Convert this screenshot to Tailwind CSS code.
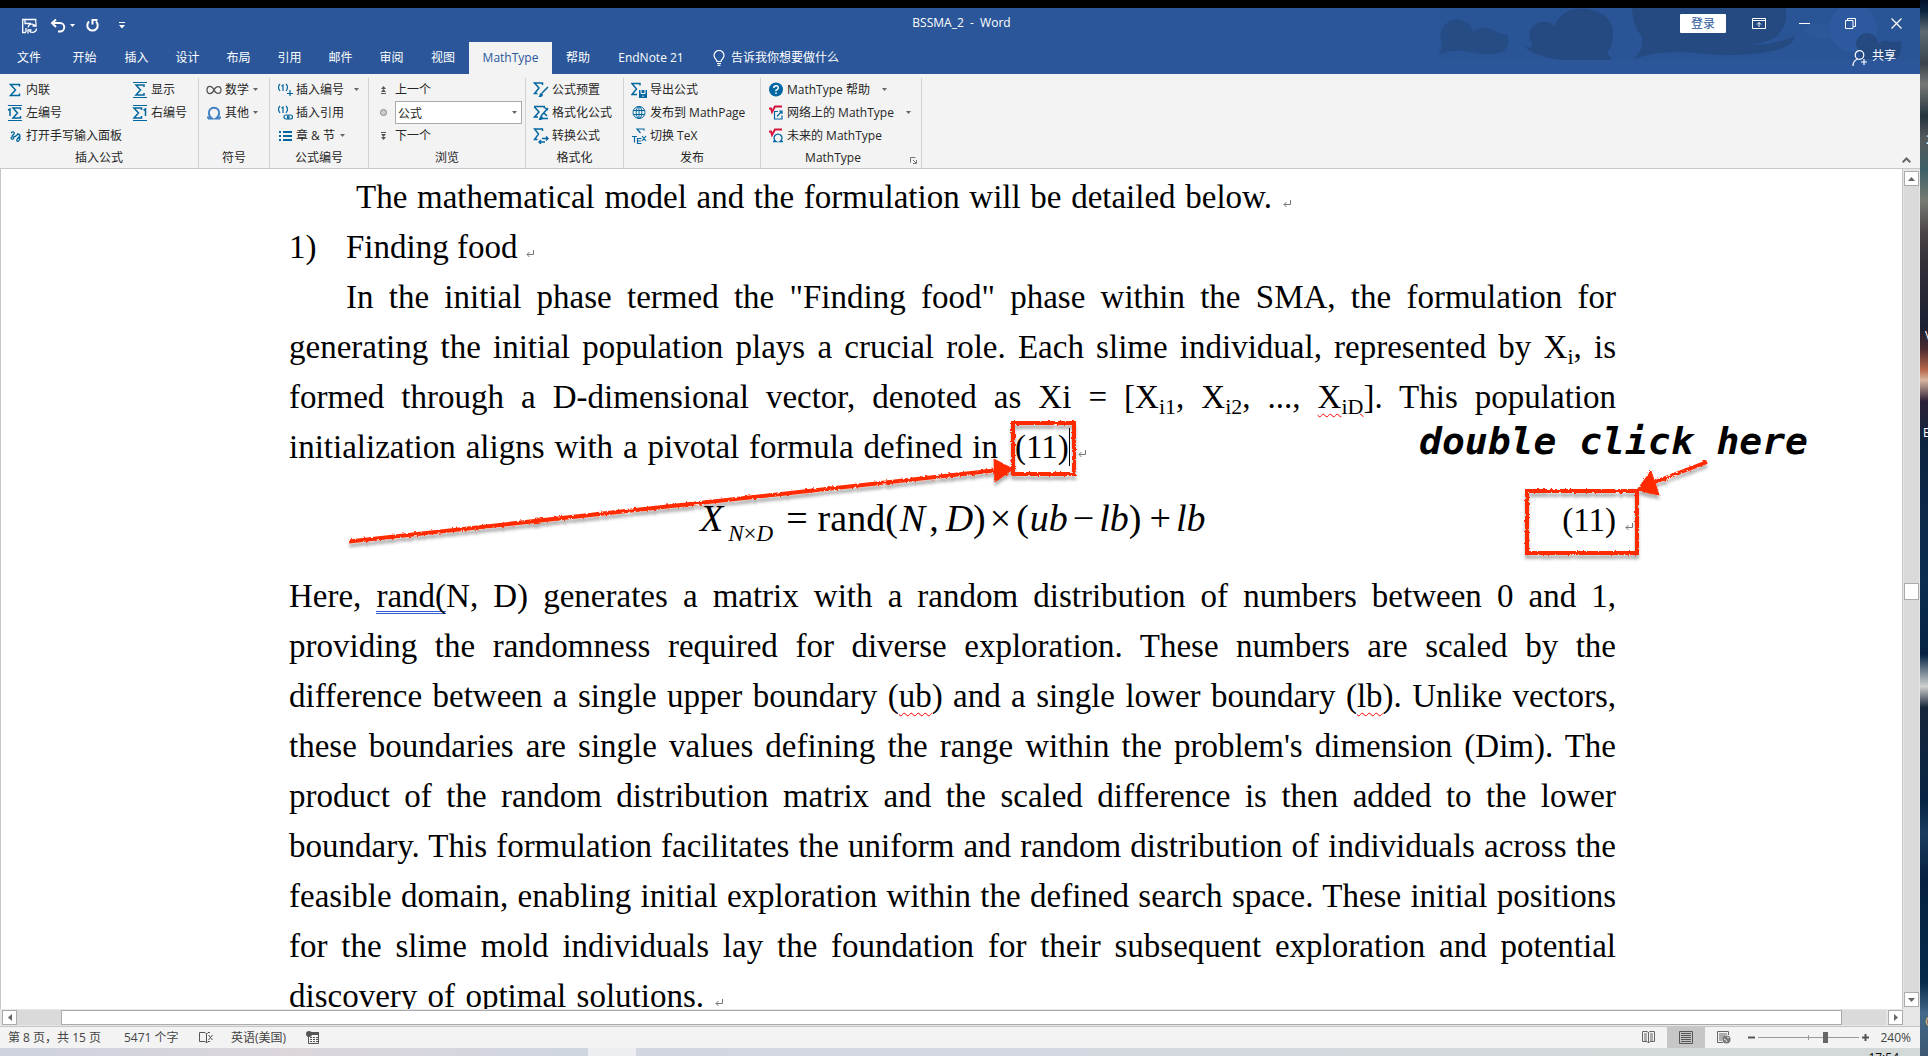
<!DOCTYPE html>
<html lang="zh-CN">
<head>
<meta charset="utf-8">
<title>BSSMA_2 - Word</title>
<script src="https://cdn.jsdelivr.net/npm/@tailwindcss/browser@4"></script>
</head>
<body class="flex h-screen overflow-hidden bg-black text-xs text-[#262626] font-['Open_Sans','Noto_Sans_CJK_SC',sans-serif]">
<svg class="hidden">
  <symbol id="sigma" viewBox="0 0 16 16"><path d="M12.5 4.5V2.5H3.5L8.5 8 3.500 13.500H12.500V11.500" fill="none" stroke="#0067a0" stroke-width="1.500"/></symbol>
  <symbol id="caret" viewBox="0 0 5 3"><path d="M0 0h5L2.500 3z" fill="currentColor"/></symbol>
  <symbol id="ret" viewBox="0 0 8 8"><path d="M7.500 0v4.500H1M3.500 2L1 4.500 3.500 7" fill="none" stroke="#777"/></symbol>
</svg>

<div class="flex h-full min-w-0 flex-1 flex-col">
  <div class="h-2 shrink-0 bg-black"></div>

  <header class="relative shrink-0 bg-[#2b579a] text-white">
    <svg class="absolute top-0 right-0 h-[52px] w-[490px]" viewBox="1430 8 490 52" fill="#254a82">
      <g opacity=".5"><path d="M1439 8h481v52h-481z" fill="#27518f"/></g>
      <path d="M1439 54q5-8 2-14a16 16 0 1 1 32-8q10-8 20-2t14 4q4 14-4 16l4 1q-18 6-36 1-16-4-32 2z" opacity=".8"/>
      <path d="M1524 46q8 4 8-2-8-14 6-21 10-3 16 3 10-22 38-16 20 6 21 22 0 14-6 21l6 8h-40q-38-3-49-15z"/>
      <path d="M1632 8h154q2 20-12 30-12 6-30 8l24-2q20-4 26-8 2 9-22 15-30 6-66 3-44-6-72 5 10-10 8-22-9-10-10-29z"/>
      <path d="M1803 30q14-12 26-4l4 10q-18 8-30-6z" fill="#2c5899"/>
      <circle cx="1853" cy="28" r="24" fill="#2d5a9f"/>
      <path d="M1856 44a11 11 0 0 1 22 0q6-6 12-2l11-1q2 14-6 18h-34z"/>
    </svg>
    <div class="relative flex h-[34px] items-center">
      <div class="flex flex-1 items-center pl-[21px]">
        <button aria-label="保存" class="mr-3"><svg class="size-[17px]" viewBox="0 0 17 17" fill="none" stroke="#fff" stroke-width="1.300"><path d="M5 15.500H1.700V2.500h13v3M4 2.500v4h6M5 15v-4"/><path d="M7 10.500a4 4 0 0 1 7-2M15 5.500v3.500h-3.500M15.500 11.500a4 4 0 0 1-7 2.500M7 16.500V13h3.500"/></svg></button>
        <button aria-label="撤消" class="mr-1"><svg class="h-[15px] w-4" viewBox="0 0 16 15" fill="none" stroke="#fff" stroke-width="2"><path d="M6 1.500L2 5l4 4M2 5h8a4 4 0 0 1 0 8.500H8"/></svg></button>
        <button aria-label="撤消选项" class="mr-[10px]"><svg class="h-[3px] w-[5px]"><use href="#caret"/></svg></button>
        <button aria-label="重复" class="mr-[19px]"><svg class="size-[15px]" viewBox="0 0 15 15" fill="none" stroke="#fff" stroke-width="2"><path d="M4 3.500a5.200 5.200 0 1 0 7 0M7.500 6.500V2h5"/></svg></button>
        <button aria-label="自定义快速访问工具栏"><svg class="h-[7px] w-[6px]" viewBox="0 0 6 7" fill="#fff"><path d="M0 0h6v1H0zM0 3h6L3 6.500z"/></svg></button>
      </div>
      <h1 class="pb-1 whitespace-pre">BSSMA_2  -  Word</h1>
      <div class="flex flex-1 items-center justify-end pr-[18px] pb-[3px]">
        <button class="mr-[26px] h-[19px] w-[46px] rounded-[1px] bg-white leading-[18px] text-[#2b579a]">登录</button>
        <button aria-label="功能区显示选项" class="mr-[33px]"><svg class="h-[11px] w-[14px]" viewBox="0 0 14 11" fill="none" stroke="#fff"><path d="M.5.500h13v10H.5zM.5 2.500h13M7 9V4.500M5 6.500l2-2 2 2"/></svg></button>
        <button aria-label="最小化" class="mr-[35px]"><svg class="h-[11px] w-[11px]" viewBox="0 0 11 11" stroke="#fff"><path d="M0 5.500h11"/></svg></button>
        <button aria-label="还原" class="mr-[35px]"><svg class="size-[11px]" viewBox="0 0 11 11" fill="none" stroke="#fff"><path d="M.5 2.500h7.500v8H.5zM2.500 2.500v-2h8v8H8"/></svg></button>
        <button aria-label="关闭"><svg class="size-[11px]" viewBox="0 0 11 11" stroke="#fff" stroke-width="1.200"><path d="M.5.500l10 10M10.500.500l-10 10"/></svg></button>
      </div>
    </div>
    <nav class="relative flex h-8 items-stretch leading-[30px]">
      <button class="w-[58px]">文件</button>
      <button class="w-[53px]">开始</button>
      <button class="w-[51px]">插入</button>
      <button class="w-[51px]">设计</button>
      <button class="w-[51px]">布局</button>
      <button class="w-[51px]">引用</button>
      <button class="w-[51px]">邮件</button>
      <button class="w-[51px]">审阅</button>
      <button class="w-[52px]">视图</button>
      <button class="w-[83px] bg-[#f3f3f3] text-[#2b579a]">MathType</button>
      <button class="w-[52px]">帮助</button>
      <button class="w-[94px]">EndNote 21</button>
      <button class="flex items-center gap-[6px] pl-[15px] leading-8"><svg class="h-4 w-3" viewBox="0 0 12 16" fill="none" stroke="#fff" stroke-width="1.200"><path d="M4 11.500c0-2-3-3-3-6a5 5 0 0 1 10 0c0 3-3 4-3 6zM4 13.500h4M4.500 15.300h3"/></svg>告诉我你想要做什么</button>
      <button class="ml-auto flex items-center gap-1 pr-6 pb-1"><svg class="mt-1 size-4" viewBox="0 0 16 16" fill="none" stroke="#fff" stroke-width="1.200"><circle cx="7.500" cy="5" r="4.300"/><path d="M1 16q0-5 4.500-7M12 9v6M9 12h6"/></svg>共享</button>
    </nav>
  </header>

  <section class="relative flex h-[95px] shrink-0 border-b border-[#c8c8c8] bg-[#f3f3f3] pt-1 leading-[23px] *:flex *:flex-col *:justify-between">
    <div class="w-[199px] border-r border-[#d2d2d2]">
      <div class="grid grid-cols-[125px_1fr] pl-[7px]">
        <button class="flex items-center gap-[3px]"><svg class="size-4"><use href="#sigma"/></svg>内联</button>
        <button class="flex items-center gap-[3px]"><svg class="size-4" viewBox="0 0 16 16" fill="none" stroke="#0067a0"><path d="M1 .5h14M1 15.500h14"/><path d="M12 5V3H4l4.500 5L4 13h8v-2" stroke-width="1.500"/></svg>显示</button>
        <button class="flex items-center gap-[3px]"><svg class="size-4" viewBox="0 0 16 16" fill="none" stroke="#0067a0"><path d="M1 .5h14M1 15.500h14"/><path d="M13.500 5V3H6l4.500 5L6 13h7.500v-2M1 5l2-1v7" stroke-width="1.500"/></svg>左编号</button>
        <button class="flex items-center gap-[3px]"><svg class="size-4" viewBox="0 0 16 16" fill="none" stroke="#0067a0"><path d="M1 .5h14M1 15.500h14"/><path d="M9.500 5V3H2l4.500 5L2 13h7.500v-2M11.500 5l2-1v7" stroke-width="1.500"/></svg>右编号</button>
        <button class="col-span-2 flex items-center gap-[3px]"><svg class="size-4" viewBox="0 0 16 16" fill="none" stroke="#0067a0" stroke-width="1.300"><path d="M4 5c2-2 4-1 3 1L5 8c0 2 3 1 5-1s4 0 2 2-3 3-2 4 3-1 3-3M10 6c3 0 4 2 2 5M4 9c0 3 2 3 3 1"/></svg>打开手写输入面板</button>
      </div>
      <div class="text-center leading-[21px]">插入公式</div>
    </div>
    <div class="w-[71px] border-r border-[#d2d2d2]">
      <div class="pl-[7px]">
        <button class="flex items-center gap-[3px]"><svg class="size-4" viewBox="0 0 16 16" fill="none" stroke="#555" stroke-width="1.300"><path d="M8 8C6 3.500 1 3 1 8s5 4.500 7 0 7-4.500 7 0-5 4.500-7 0z"/></svg>数学<svg class="ml-px h-[3px] w-[5px] text-[#666]"><use href="#caret"/></svg></button>
        <button class="flex items-center gap-[3px]"><svg class="size-4" viewBox="0 0 16 16" fill="none" stroke="#3f7fc4" stroke-width="2"><path d="M2 13.500h4C2.500 11 2 7 4 4.500s6-2.500 8 0 1.500 6.500-2 9h4M2 13.500v-2M14 13.500v-2"/></svg>其他<svg class="ml-px h-[3px] w-[5px] text-[#666]"><use href="#caret"/></svg></button>
      </div>
      <div class="text-center leading-[21px]">符号</div>
    </div>
    <div class="w-[99px] border-r border-[#d2d2d2]">
      <div class="pl-[7px]">
        <button class="flex items-center gap-[3px]"><svg class="size-4" viewBox="0 0 16 16" fill="none" stroke="#0067a0"><path d="M3 2q-3 3 0 7M9 2q3 3 0 7M4.500 4L6 3v6M13 8v6M10 11.500h6" stroke-width="1.200"/></svg>插入编号<svg class="ml-[7px] h-[3px] w-[5px] text-[#666]"><use href="#caret"/></svg></button>
        <button class="flex items-center gap-[3px]"><svg class="size-4" viewBox="0 0 16 16" fill="none" stroke="#0067a0" stroke-width="1.200"><path d="M3 1q-3 3 0 7M9 1q3 3 0 7M4.500 3L6 2v6"/><rect x="7" y="10" width="5" height="4" rx="2"/><rect x="10.500" y="10" width="5" height="4" rx="2"/></svg>插入引用</button>
        <button class="flex items-center gap-[3px]"><svg class="size-4" viewBox="0 0 16 16" fill="#0067a0"><path d="M2 3h2v2H2zM2 7h2v2H2zM2 11h2v2H2zM6 3h9v2H6zM6 7h9v2H6zM6 11h9v2H6z"/></svg>章 &amp; 节<svg class="ml-[2px] h-[3px] w-[5px] text-[#666]"><use href="#caret"/></svg></button>
      </div>
      <div class="text-center leading-[21px]">公式编号</div>
    </div>
    <div class="w-[157px] border-r border-[#d2d2d2]">
      <div class="pl-[11px]">
        <button class="flex items-center gap-2"><svg class="h-2 w-[7px]" viewBox="0 0 7 8" fill="#555"><path d="M3.500 0L6 3H1zM3.500 3L6 6H1zM1 7h5v1H1z"/></svg>上一个</button>
        <div class="flex h-[23px] items-center gap-2"><svg class="size-[7px]" viewBox="0 0 7 7"><circle cx="3.500" cy="3.500" r="3" fill="#ccc" stroke="#888"/></svg>
          <div class="relative"><select aria-label="浏览对象" class="block h-[23px] w-[127px] appearance-none border border-[#ababab] bg-white pb-[2px] pl-[2px]"><option>公式</option></select><svg class="pointer-events-none absolute top-[10px] right-[5px] h-[3px] w-[5px] text-[#666]"><use href="#caret"/></svg></div></div>
        <button class="flex items-center gap-2"><svg class="h-2 w-[7px]" viewBox="0 0 7 8" fill="#555"><path d="M3.500 8L6 5H1zM3.500 5L6 2H1zM1 0h5v1H1z"/></svg>下一个</button>
      </div>
      <div class="text-center leading-[21px]">浏览</div>
    </div>
    <div class="w-[98px] border-r border-[#d2d2d2]">
      <div class="pl-[7px]">
        <button class="flex items-center gap-[3px]"><svg class="size-4" viewBox="0 0 16 16" fill="none" stroke="#0067a0" stroke-width="1.500"><path d="M9.500 3V1H1.500L6 6 1.500 11.500h3M15 5L9 11" /><path d="M5 15c2 0 1-4 3-4s3 3 0 4z" fill="#0067a0" stroke="none"/></svg>公式预置</button>
        <button class="flex items-center gap-[3px]"><svg class="size-4" viewBox="0 0 16 16" fill="none" stroke="#0067a0" stroke-width="1.500"><path d="M1 1.500h11M10 1.500L15 5M1.500 2L6 7l-4.500 5H5M15 3L8 11M9 13.500h6M11 8l3 3"/><path d="M5 15c2 0 1-4 3-4s3 3 0 4z" fill="#0067a0" stroke="none"/></svg>格式化公式</button>
        <button class="flex items-center gap-[3px]"><svg class="size-4" viewBox="0 0 16 16" fill="none" stroke="#0067a0" stroke-width="1.400"><path d="M9.500 3V1H1.500L5.500 6l-4 5.500h3M9 10.500h6M13 8.500l2 2-2 2M12 14H6M8 12l-2 2 2 2"/></svg>转换公式</button>
      </div>
      <div class="text-center leading-[21px]">格式化</div>
    </div>
    <div class="w-[137px] border-r border-[#d2d2d2]">
      <div class="pl-[7px]">
        <button class="flex items-center gap-[3px]"><svg class="size-4" viewBox="0 0 16 16" fill="none" stroke="#0067a0" stroke-width="1.400"><path d="M9 3.500V1.500H1L5.500 7 1 12.500h5"/><path d="M8 8h8v8H8z" fill="#0067a0" stroke="none"/><path d="M10 8v3.500h4V8M12 15v-1.500" stroke="#fff" stroke-width="1"/></svg>导出公式</button>
        <button class="flex items-center gap-[3px]"><svg class="size-4" viewBox="0 0 16 16" fill="none" stroke="#0067a0"><circle cx="8" cy="7.500" r="6"/><ellipse cx="8" cy="7.500" rx="2.800" ry="6"/><path d="M2 5.500h12M2 9.500h12M8 1.500v12"/></svg>发布到 MathPage</button>
        <button class="flex items-center gap-[3px]"><svg class="size-4" viewBox="0 0 16 16" fill="none" stroke="#0067a0" stroke-width="1.200"><path d="M13 2.500V1H6l3.500 4M1 8.500h5M3.500 8.500v6M10.500 10.500h-4v5h4M6.500 13h3.500M11 8l4 5M15 8l-4 5"/></svg>切换 TeX</button>
      </div>
      <div class="text-center leading-[21px]">发布</div>
    </div>
    <div class="relative w-[161px] border-r border-[#d2d2d2]">
      <div class="pl-[7px]">
        <button class="flex items-center gap-[3px]"><svg class="size-4" viewBox="0 0 16 16"><circle cx="8" cy="7.500" r="7" fill="#0067a0"/><path d="M5.800 6q0-2.300 2.300-2.300T10.300 6Q10.300 7 8 8.300v1M8 10.500v1.500" fill="none" stroke="#fff" stroke-width="1.500"/></svg>MathType 帮助<svg class="ml-[9px] h-[3px] w-[5px] text-[#666]"><use href="#caret"/></svg></button>
        <button class="flex items-center gap-[3px]"><svg class="size-4" viewBox="0 0 16 16" fill="none"><path d="M1 3.500h2L4 7l3-5.500h7" stroke="#d8133d" stroke-width="2"/><path d="M10 6.500H6.500V14H14v-3.500M9 11.500l4.500-5M11 6h3v3" stroke="#0067a0" stroke-width="1.200"/></svg>网络上的 MathType<svg class="ml-[9px] h-[3px] w-[5px] text-[#666]"><use href="#caret"/></svg></button>
        <button class="flex items-center gap-[3px]"><svg class="size-4" viewBox="0 0 16 16" fill="none"><path d="M1 3.500h2L4 7l3-5.500h7" stroke="#d8133d" stroke-width="2"/><path d="M5 13.500h3a4 4 0 1 1 4 0h3" stroke="#0067a0" stroke-width="1.300"/></svg>未来的 MathType</button>
      </div>
      <div class="pr-4 text-center leading-[21px]">MathType</div>
      <button aria-label="更多" class="absolute right-1 bottom-1"><svg class="size-[7px]" viewBox="0 0 7 7" fill="none" stroke="#777"><path d="M.5 5.500v-5h5M3 3l3 3M6.500 3v3.500H3"/></svg></button>
    </div>
    <button aria-label="折叠功能区" class="absolute right-[9px] bottom-[5px]"><svg class="h-[6px] w-[9px]" viewBox="0 0 9 6" fill="none" stroke="#666" stroke-width="2"><path d="M.7 5.300L4.500 1.500l3.800 3.800"/></svg></button>
  </section>

  <div class="flex min-h-0 flex-1">
    <main class="min-w-0 flex-1 overflow-hidden border-x border-[#c6c6c6] bg-white pt-[3px] pl-[2px]">
      <article class="relative mx-auto max-w-[1327px] text-[33px] leading-[50px] whitespace-nowrap text-black font-['Liberation_Serif',serif] [&_sub]:-bottom-[6px] [&_sub]:text-[22px]">
        <p class="flex items-baseline gap-[11px] pl-[67px]"><span class="w-[916px] text-justify [text-align-last:justify]">The mathematical model and the formulation will be detailed below.</span><svg class="size-2"><use href="#ret"/></svg></p>
        <p class="flex"><span class="w-[57px]">1)</span><span>Finding food <svg class="inline size-2 align-baseline"><use href="#ret"/></svg></span></p>
        <p class="*:block *:text-justify *:[text-align-last:justify]">
          <span class="pl-[57px]">In the initial phase termed the "Finding food" phase within the SMA, the formulation for</span>
          <span>generating the initial population plays a crucial role. Each slime individual, represented by X<sub>i</sub>, is</span>
          <span>formed through a D-dimensional vector, denoted as Xi = [X<sub>i1</sub>, X<sub>i2</sub>, ..., <u class="decoration-[#f00] decoration-wavy decoration-1 underline-offset-[5px]">X<sub>iD</sub></u>]. This population</span>
        </p>
        <p class="flex items-baseline"><span class="w-[709px] text-justify [text-align-last:justify]">initialization aligns with a pivotal formula defined in</span><span class="ml-[17px]">(11)</span><span class="h-[38px] w-px self-center bg-black"></span><svg class="ml-2 size-2"><use href="#ret"/></svg></p>
        <div class="flex h-[99px] items-baseline pt-[23px] text-[38px] leading-[46px]">
          <div class="flex flex-1 items-baseline pl-[411px]"><i>X</i><i class="ml-[5px] translate-y-[10px] text-[23px]">N<span class="not-italic">×</span>D</i><span class="ml-[13px]">=</span><span class="ml-[10px]">rand(</span><i class="ml-[2px]">N</i><span class="ml-1">,</span><i class="ml-[7px]">D</i><span>)</span><span class="ml-1">×</span><span class="ml-[5px]">(</span><i class="ml-px">ub</i><span class="ml-[5px]">−</span><i class="ml-[5px]">lb</i><span>)</span><span class="ml-2">+</span><i class="ml-[5px]">lb</i></div>
          <span class="text-[33px]">(11)</span><svg class="-mr-[17px] ml-[9px] size-2"><use href="#ret"/></svg>
        </div>
        <p class="*:block *:text-justify *:[text-align-last:justify]">
          <span>Here, <u class="inline-block border-b-3 border-double border-[#2f5fd0] leading-[30px] no-underline">rand(</u>N, D) generates a matrix with a random distribution of numbers between 0 and 1,</span>
          <span>providing the randomness required for diverse exploration. These numbers are scaled by the</span>
          <span>difference between a single upper boundary (<u class="decoration-[#f00] decoration-wavy decoration-1 underline-offset-[5px]">ub</u>) and a single lower boundary (<u class="decoration-[#f00] decoration-wavy decoration-1 underline-offset-[5px]">lb</u>). Unlike vectors,</span>
          <span>these boundaries are single values defining the range within the problem's dimension (Dim). The</span>
          <span>product of the random distribution matrix and the scaled difference is then added to the lower</span>
          <span>boundary. This formulation facilitates the uniform and random distribution of individuals across the</span>
          <span>feasible domain, enabling initial exploration within the defined search space. These initial positions</span>
          <span>for the slime mold individuals lay the foundation for their subsequent exploration and potential</span>
        </p>
        <p class="flex items-baseline gap-[11px]"><span class="w-[415px] text-justify [text-align-last:justify]">discovery of optimal solutions.</span><svg class="size-2"><use href="#ret"/></svg></p>

        <svg class="pointer-events-none absolute top-0 left-0 h-[420px] w-[1500px]" viewBox="289 172 1500 420">
          <defs><filter id="chalk" filterUnits="userSpaceOnUse" x="289" y="171" width="1500" height="420"><feTurbulence type="fractalNoise" baseFrequency=".35" numOctaves="2" seed="4"/><feDisplacementMap in="SourceGraphic" scale="3" result="d"/><feDropShadow in="d" dx="0" dy="4" stdDeviation="1.500" flood-color="#000" flood-opacity=".3"/></filter></defs>
          <g filter="url(#chalk)" fill="none" stroke="#ff2a00" stroke-width="4">
            <path d="M1013 423h61v51h-61zM1527 491h110v62h-110zM349 541.500L994 470.500M1707 462L1655 482"/>
            <path d="M994 459l19 10-18 13zM1637 490l14-19 8 24z" fill="#ff2a00" stroke-width="1"/>
          </g>
        </svg>
        <strong class="absolute top-[244px] left-[1130px] text-[38px] leading-[50px] italic font-['DejaVu_Sans_Mono',monospace]">double click here</strong>
      </article>
    </main>
    <div class="flex w-[17px] flex-col bg-[#e6e6e6] px-px pt-[2px] pb-[2px]">
      <button aria-label="向上滚动" class="grid h-[15px] w-[15px] shrink-0 place-items-center border border-[#ababab] bg-white"><svg class="h-1 w-[7px]" viewBox="0 0 7 4"><path d="M3.500 0L7 4H0z" fill="#666"/></svg></button>
      <div class="flex-[397] bg-[#dadada]"></div>
      <div class="h-[17px] w-[15px] border border-[#ababab] bg-white"></div>
      <div class="flex-[392] bg-[#dadada]"></div>
      <button aria-label="向下滚动" class="grid h-[15px] w-[15px] shrink-0 place-items-center border border-[#ababab] bg-white"><svg class="h-1 w-[7px]" viewBox="0 0 7 4"><path d="M3.500 4L7 0H0z" fill="#666"/></svg></button>
    </div>
  </div>

  <div class="flex h-[17px] shrink-0 bg-[#e6e6e6] pt-px pr-[17px] pb-px pl-[2px]">
    <button aria-label="向左滚动" class="grid w-[15px] place-items-center border border-[#ababab] bg-white"><svg class="h-[7px] w-1" viewBox="0 0 4 7"><path d="M0 3.500L4 0v7z" fill="#666"/></svg></button>
    <div class="w-11 bg-[#dadada]"></div>
    <div class="flex-1 border border-[#ababab] bg-white"></div>
    <div class="mr-[2px] w-11 bg-[#dadada]"></div>
    <button aria-label="向右滚动" class="grid w-[15px] place-items-center border border-[#ababab] bg-white"><svg class="h-[7px] w-1" viewBox="0 0 4 7"><path d="M4 3.500L0 0v7z" fill="#666"/></svg></button>
  </div>

  <footer class="flex h-[22px] shrink-0 items-stretch border-t border-[#c6c6c6] bg-[#f3f3f3] pr-[9px] pl-2 leading-[21px] text-[#444]">
    <span class="w-[116px]">第 8 页，共 15 页</span>
    <span class="w-[75px]">5471 个字</span>
    <button aria-label="校对" class="w-8"><svg class="h-3 w-[15px]" viewBox="0 0 15 12" fill="none" stroke="#555"><path d="M7.500 11L6 9.500H.5v-9H6L7.500 2 9 .500h2M7.500 2v9L9 9.500h2M9.500 3l4 5M13.500 3l-4 5"/></svg></button>
    <span class="w-[75px]">英语(美国)</span>
    <button aria-label="宏"><svg class="h-[13px] w-[13px]" viewBox="0 0 13 13"><path d="M2.500 1.500h10v11h-10z" fill="none" stroke="#555"/><path d="M5 1h8v3H5zM4 6h2v1H4zM7 6h2v1H7zM10 6h2v1h-2zM4 8h2v1H4zM7 8h2v1H7zM10 8h2v1h-2zM4 10h2v1H4zM7 10h2v1H7zM10 10h2v1h-2z" fill="#555"/><circle cx="3" cy="3" r="3" fill="#555"/></svg></button>
    <div class="ml-auto flex items-center">
      <button aria-label="阅读视图" class="grid h-full w-[38px] place-items-center"><svg class="h-[13px] w-[13px]" viewBox="0 0 13 13" fill="none" stroke="#666"><path d="M6.500 12V1.500L5 .500H.5v10H5l1.500 1.500 1.500-1.500h4.500V.500H8L6.500 1.500M2 3h3M2 5h3M2 7h3M2 9h3M8 3h3M8 5h3M8 7h3M8 9h3"/></svg></button>
      <button aria-label="页面视图" class="grid h-full w-[38px] place-items-center bg-[#c6c6c6]"><svg class="h-[13px] w-[14px]" viewBox="0 0 14 13" fill="none" stroke="#555"><path d="M.5.500h13v12H.5zM2 2.500h10M2 4.500h10M2 6.500h10M2 8.500h10M2 10.500h10" /></svg></button>
      <button aria-label="Web 版式视图" class="grid h-full w-[38px] place-items-center"><svg class="h-[13px] w-[14px]" viewBox="0 0 14 13" fill="none" stroke="#666"><path d="M6 11.500H.5v-11h11V4M2 3h8M2 5h6M2 7h4M2 9h3"/><circle cx="9.500" cy="8.500" r="4" fill="#777" stroke="none"/><path d="M7 8q2 0 3 3M10 6l2 1" stroke="#eee"/></svg></button>
      <button aria-label="缩小" class="ml-[5px] w-[7px]"><svg class="size-[7px]" viewBox="0 0 7 7"><path d="M0 3.500h7" stroke="#555" stroke-width="2"/></svg></button>
      <input type="range" aria-label="显示比例" min="0" max="100" value="68" class="mx-[3px] h-[11px] w-[101px] appearance-none bg-[linear-gradient(#999,#999),linear-gradient(#999,#999)] bg-[length:100%_1px,1px_5px] bg-center bg-no-repeat [&::-webkit-slider-thumb]:h-[11px] [&::-webkit-slider-thumb]:w-[5px] [&::-webkit-slider-thumb]:appearance-none [&::-webkit-slider-thumb]:bg-[#666]">
      <button aria-label="放大" class="w-[7px]"><svg class="size-[7px]" viewBox="0 0 7 7"><path d="M0 3.500h7M3.500 0v7" stroke="#555" stroke-width="2"/></svg></button>
      <span class="w-[42px] text-right">240%</span>
    </div>
  </footer>
  <div class="flex h-2 shrink-0 overflow-hidden bg-linear-to-r from-[#cfd3df] via-[#d3d8e1] to-[#d3d8d8] text-black">
    <div class="w-[588px] bg-linear-to-r from-[#cdd2de] via-[#dcd6dc] to-[#cfd6e0]"></div>
    <div class="w-12 bg-[#eceef1]"></div>
    <span class="mt-[2px] mr-[21px] ml-auto leading-4">17:54</span>
  </div>
</div>

<aside class="relative w-2 shrink-0 overflow-hidden bg-[linear-gradient(#04122a_0,#0b2440_1%,#5c6a72_3%,#3a444a_6%,#777_8%,#24343c_11%,#55595c_13%,#3d6066_16%,#777b74_19%,#4b4448_22%,#332f38_25%,#1a1f31_31%,#4a2a30_33%,#b5654a_35%,#d9b59f_36%,#2c2036_38%,#0d2440_42%,#0b2d50_55%,#062343_62%,#8d9aa4_64%,#cfd0cf_65%,#17263a_67%,#072444_76%,#1b3d60_79%,#05213f_83%,#062a4a_93%,#44698a_96%,#3c5870_100%)] text-xs text-white" aria-hidden="true">
  <span class="absolute top-[132px] left-[6px]">2</span>
  <span class="absolute top-[328px] left-[5px]">V</span>
  <span class="absolute top-[425px] left-[3px]">B</span>
  <span class="absolute top-[1014px] left-[5px] text-orange-300">O</span>
</aside>
</body>
</html>
